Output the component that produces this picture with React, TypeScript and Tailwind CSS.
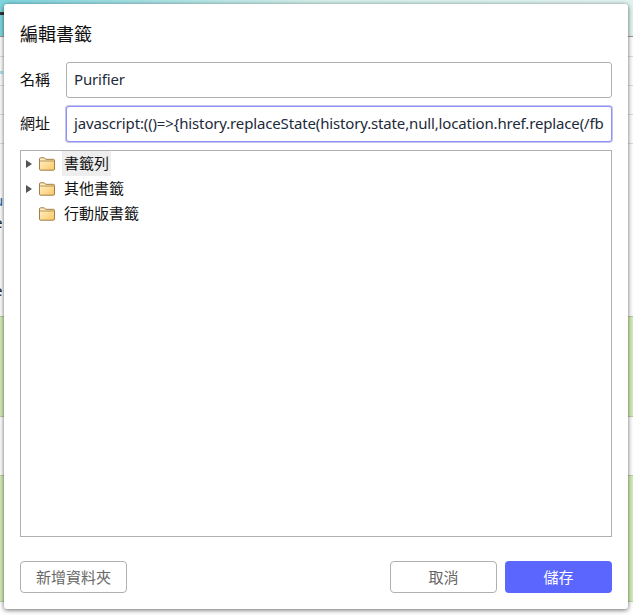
const ROWS = ['h-[20px]', 'h-[29px]', 'h-[29px]', 'h-[29px]'];

function Folder() {
  return (
    <svg width="16" height="14" viewBox="0 0 16 14" className="shrink-0">
      <defs>
        <linearGradient id="folderFill" x1="0" y1="0" x2="1" y2="1">
          <stop offset="0" stopColor="#fff4cf" />
          <stop offset="1" stopColor="#fcc763" />
        </linearGradient>
      </defs>
      <path
        d="M0.5 12V2a1.2 1.2 0 0 1 1.2-1.2h3.6l1.4 1.5h7.6a1.2 1.2 0 0 1 1.2 1.2V12a1.2 1.2 0 0 1-1.2 1.2H1.7A1.2 1.2 0 0 1 0.5 12Z"
        fill="url(#folderFill)"
        stroke="#a07f4a"
        strokeWidth="1"
      />
      <path d="M1 4h14" stroke="#b8935a" strokeWidth="1" />
    </svg>
  );
}

function TreeRow({ label, arrow, active }: { label: string; arrow?: boolean; active?: boolean }) {
  return (
    <div className="flex h-[25px] items-center">
      <div className="flex w-[18px] shrink-0 justify-end pr-[7px]">
        {arrow && <div className="h-0 w-0 border-y-[4.5px] border-l-[6px] border-y-transparent border-l-[#555]" />}
      </div>
      <Folder />
      <div className={`ml-[7px] flex h-[25px] items-center px-[2px] text-[15px] text-[#111] ${active ? 'bg-[#eeeeee]' : ''}`}>
        {label}
      </div>
    </div>
  );
}

function Field({ label, value, focus }: { label: string; value: string; focus?: boolean }) {
  return (
    <div className="flex h-[36px] items-center">
      <div className="w-[46px] shrink-0 pb-[2px] text-[15px] text-[#111]">{label}</div>
      <div
        className={`flex h-[36px] min-w-0 flex-1 items-center overflow-hidden whitespace-nowrap rounded-[3px] border bg-white px-[7px] pb-[2px] text-[15px] tracking-[-0.15px] text-[#1c2a3a] ${
          focus ? 'border-[#8f8ff0] shadow-[0_0_0_1px_#c4c4f7]' : 'border-[#b0b0b0]'
        }`}
      >
        {value}
      </div>
    </div>
  );
}

export default function App() {
  return (
    <div className="relative h-[615px] w-[633px] overflow-hidden bg-white font-['Noto_Sans','Noto_Sans_CJK_TC',sans-serif]">
      {/* page behind the dialog */}
      <div className="flex h-full flex-col text-[15px] text-[#222]">
        <div className="h-[37px] shrink-0 border-b border-[#999] bg-gradient-to-r from-[#7fd6e0] via-[#d4f1ec] to-[#e2f4f1]">
          <div className="mt-[12px] h-[3px] w-[4px] bg-[#333]" />
        </div>
        {ROWS.map((h, i) => (
          <div key={i} className={`${h} shrink-0 border-b border-[#ddd]`}>
            {i === 1 && <div className="mt-[14px] h-[3px] w-[3px] bg-[#a8e6f0]" />}
          </div>
        ))}
        <div className="h-[172px] shrink-0 whitespace-nowrap leading-[22px]">
          <div className="-ml-[6px] mt-[45px] text-[#2a6fb0]">u</div>
          <div className="-ml-[6px]">e</div>
          <div className="-ml-[6px] mt-[46px]">e</div>
        </div>
        <div className="h-[101px] shrink-0 border-y border-[#b8cfa8] bg-[#d6eeb8]" />
        <div className="h-[58px] shrink-0" />
        <div className="h-[127px] shrink-0 border-y border-[#b8cfa8] bg-[#d6eeb8]" />
      </div>

      {/* dialog */}
      <div className="absolute left-[4px] top-[4px] flex h-[605px] w-[624px] flex-col rounded-[3px] bg-white px-[16px] shadow-[0_1px_5px_rgba(0,0,0,0.6)]">
        <h2 className="flex h-[58px] shrink-0 items-center pt-[2px] text-[18px] font-normal text-[#111]">編輯書籤</h2>
        <div className="flex flex-col gap-[8px]">
          <Field label="名稱" value="Purifier" />
          <Field focus label="網址" value="javascript:(()=>{history.replaceState(history.state,null,location.href.replace(/fb" />
        </div>
        <div className="mt-[8px] h-[387px] shrink-0 border border-[#b0b0b0] bg-white">
          <TreeRow arrow active label="書籤列" />
          <TreeRow arrow label="其他書籤" />
          <TreeRow label="行動版書籤" />
        </div>
        <div className="mt-[24px] flex items-center justify-between">
          <button className="h-[32px] w-[107px] rounded-[4px] border border-[#b0b0b0] bg-white text-[15px] text-[#666]">新增資料夾</button>
          <div className="flex gap-[8px]">
            <button className="h-[32px] w-[107px] rounded-[4px] border border-[#b0b0b0] bg-white text-[15px] text-[#666]">取消</button>
            <button className="h-[32px] w-[107px] rounded-[4px] bg-[#5b66ff] text-[15px] text-white">儲存</button>
          </div>
        </div>
      </div>
    </div>
  );
}
